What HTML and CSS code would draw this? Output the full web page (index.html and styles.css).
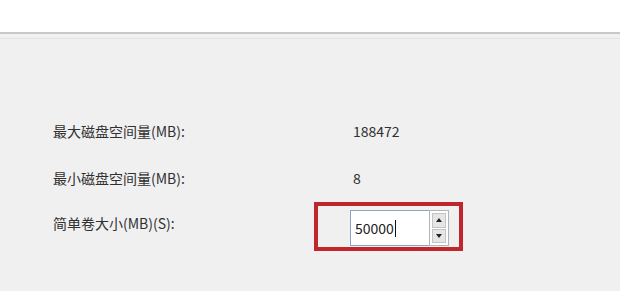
FILE: index.html
```html
<!DOCTYPE html>
<html>
	<head>
		<meta charset="utf-8">
		<title>指定卷大小</title>
		<link rel="stylesheet" href="styles.css">
	</head>
	<body>
		<div class="header"></div>
		<div class="rule"></div>
		<div class="form">
			<div class="row">
				<div class="label">最大磁盘空间量(MB):</div>
				<div class="value">188472</div>
			</div>
			<div class="row">
				<div class="label">最小磁盘空间量(MB):</div>
				<div class="value">8</div>
			</div>
			<div class="row last">
				<div class="label short">简单卷大小(MB)(S):</div>
				<div class="mark">
					<div class="spin">
						<div class="field">50000<span class="caret"></span></div>
						<div class="buttons">
							<div class="btn"><span class="up"></span></div>
							<div class="btn"><span class="down"></span></div>
						</div>
					</div>
				</div>
			</div>
		</div>
	</body>
</html>
```

FILE: styles.css
```css
* {
	margin: 0;
	padding: 0;
	box-sizing: border-box;
}

html,
body {
	background: #f0f0f0;
	overflow: hidden;
}

body {
	min-height: 291px;
	font-family: "Noto Sans CJK SC", "Noto Sans", sans-serif;
	font-size: 14px;
	color: #303030;
}

/* 顶部白色标题区 */
.header {
	height: 34px;
	background: #fff;
	border-bottom: 2px solid #c8c8c8;
}

.rule {
	height: 1px;
	margin-top: 4px;
	background: #e3e3e3;
}

.form {
	padding: 68px 0 0 53px;
}

.row {
	display: flex;
	align-items: center;
	height: 47px;
}

.label {
	width: 300px;
	line-height: 16px;
}

.label.short {
	width: 261px;
	margin-bottom: 8px;
}

.value {
	line-height: 16px;
}

.row.last {
	height: auto;
	margin-top: 1px;
}

/* 红色标注框 */
.mark {
	border: 4px solid #c0262c;
	padding: 4px 10px 1px 32px;
}

.spin {
	display: flex;
	height: 36px;
}

.field {
	width: 79px;
	background: #fff;
	border: 1px solid #8ba6c4;
	border-right: none;
	padding-left: 4px;
	display: flex;
	align-items: center;
	color: #222;
}

.caret {
	display: inline-block;
	width: 1px;
	height: 17px;
	background: #111;
	margin-left: 1px;
}

.buttons {
	width: 20px;
	background: #fff;
	border: 1px solid #b4b4b4;
	padding: 2px;
	display: flex;
	flex-direction: column;
	gap: 1px;
}

.btn {
	flex: 1;
	background: #e6e6e6;
	border: 1px solid #c4c4c4;
	display: flex;
	align-items: center;
	justify-content: center;
}

.up,
.down {
	width: 0;
	height: 0;
	border-left: 3px solid transparent;
	border-right: 3px solid transparent;
}

.up {
	border-bottom: 4px solid #222;
}

.down {
	border-top: 4px solid #222;
}
```
